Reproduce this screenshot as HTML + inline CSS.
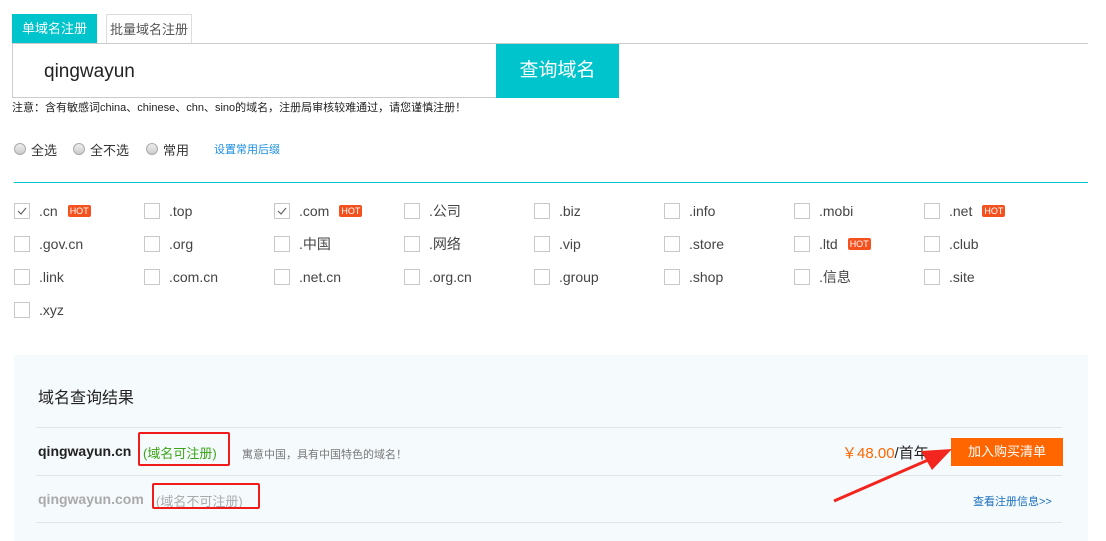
<!DOCTYPE html>
<html><head><meta charset="utf-8"><style>
*{margin:0;padding:0;box-sizing:border-box}
body{width:1106px;height:541px;background:#fff;font-family:"Liberation Sans","Noto Sans CJK SC",sans-serif;color:#333;position:relative;overflow:hidden}
.a{position:absolute;white-space:nowrap}
.cb{position:absolute;width:16px;height:16px;border:1px solid #c8c8c8;background:#fff}
.lb{position:absolute;font-size:14px;color:#444;line-height:16px}
.hot{display:inline-block;background:#f4511e;color:#fff;font-size:9px;line-height:12px;padding:0 2px;border-radius:2px;margin-left:10px;vertical-align:2px}
.rd{position:absolute;width:12px;height:12px;border-radius:50%;border:1px solid #aaa;background:linear-gradient(#eee,#ccc)}
</style></head><body>
<div class="a" style="left:12px;top:14px;width:85px;height:30px;background:#00c4cc;color:#fff;font-size:13px;line-height:30px;text-align:center">单域名注册</div>
<div class="a" style="left:106px;top:14px;width:86px;height:30px;border:1px solid #ddd;border-bottom:none;color:#555;font-size:13px;line-height:30px;text-align:center">批量域名注册</div>
<div class="a" style="left:12px;top:43px;width:1076px;height:1px;background:#ccc"></div>
<div class="a" style="left:12px;top:44px;width:485px;height:54px;border:1px solid #ccc;border-top:none"></div>
<div class="a" style="left:44px;top:61px;font-size:19px;color:#222">qingwayun</div>
<div class="a" style="left:496px;top:44px;width:123px;height:54px;background:#00c4cc;color:#fff;font-size:19px;line-height:54px;text-align:center">查询域名</div>
<div class="a" style="left:12px;top:99px;font-size:11px;color:#222">注意：含有敏感词china、chinese、chn、sino的域名，注册局审核较难通过，请您谨慎注册！</div>
<div class="rd" style="left:14px;top:143px"></div><div class="a" style="left:31px;top:140px;font-size:13px">全选</div>
<div class="rd" style="left:73px;top:143px"></div><div class="a" style="left:90px;top:140px;font-size:13px">全不选</div>
<div class="rd" style="left:146px;top:143px"></div><div class="a" style="left:163px;top:140px;font-size:13px">常用</div>
<div class="a" style="left:214px;top:141px;font-size:11px;color:#1a8fe3">设置常用后缀</div>
<div class="a" style="left:14px;top:182px;width:1074px;height:1px;background:#00c4cc"></div>
<div id="g"></div>
<div class="a" style="left:14px;top:355px;width:1074px;height:186px;background:#f5fafd"></div>
<div class="a" style="left:38px;top:384px;font-size:16px;color:#222">域名查询结果</div>
<div class="a" style="left:36px;top:427px;width:1026px;height:1px;background:#dfe4e8"></div>
<div class="a" style="left:36px;top:475px;width:1026px;height:1px;background:#dfe4e8"></div>
<div class="a" style="left:36px;top:522px;width:1026px;height:1px;background:#dfe4e8"></div>
<div class="a" style="left:38px;top:443px;font-size:14px;font-weight:bold;color:#222">qingwayun.cn</div>
<div class="a" style="left:143px;top:443px;font-size:13px;color:#3aa515">(域名可注册)</div>
<div class="a" style="left:242px;top:446px;font-size:11px;color:#777">寓意中国，具有中国特色的域名！</div>
<div class="a" style="left:38px;top:491px;font-size:14px;font-weight:bold;color:#aaa">qingwayun.com</div>
<div class="a" style="left:156px;top:491px;font-size:13px;color:#aaa">(域名不可注册)</div>
<div class="a" style="left:138px;top:432px;width:92px;height:34px;border:2px solid #f01c1c;border-radius:2px"></div>
<div class="a" style="left:152px;top:483px;width:108px;height:26px;border:2px solid #f01c1c;border-radius:2px"></div>
<div class="a" style="left:842px;top:442px;font-size:15px;color:#ff6600">￥48.00<span style="color:#222">/首年</span></div>
<div class="a" style="left:951px;top:438px;width:112px;height:28px;background:#ff6600;color:#fff;font-size:13px;line-height:28px;text-align:center">加入购买清单</div>
<div class="a" style="left:973px;top:493px;font-size:11px;color:#1a6fbf">查看注册信息&gt;&gt;</div>
<svg class="a" style="left:0;top:0" width="1106" height="541"><line x1="834" y1="501" x2="935" y2="457" stroke="#f2261f" stroke-width="3"/><polygon points="952,449 921,451 932,470" fill="#f2261f"/></svg>
<script>
var d=[[".cn",1,1],[".top"],[".com",1,1],[".公司"],[".biz"],[".info"],[".mobi"],[".net",0,1],[".gov.cn"],[".org"],[".中国"],[".网络"],[".vip"],[".store"],[".ltd",0,1],[".club"],[".link"],[".com.cn"],[".net.cn"],[".org.cn"],[".group"],[".shop"],[".信息"],[".site"],[".xyz"]];
var h="";d.forEach(function(e,i){var x=14+130*(i%8),y=203+33*Math.floor(i/8);
h+='<div class="cb" style="left:'+x+'px;top:'+y+'px">'+(e[1]?'<svg width="14" height="14" style="position:absolute;left:0;top:0"><path d="M3 7l3 3 5-6" stroke="#666" fill="none" stroke-width="1.2"/></svg>':'')+'</div>';
h+='<div class="lb" style="left:'+(x+25)+'px;top:'+(y+0)+'px">'+e[0]+(e[2]?'<span class="hot">HOT</span>':'')+'</div>';});
document.getElementById("g").innerHTML=h;
</script>
</body></html>
